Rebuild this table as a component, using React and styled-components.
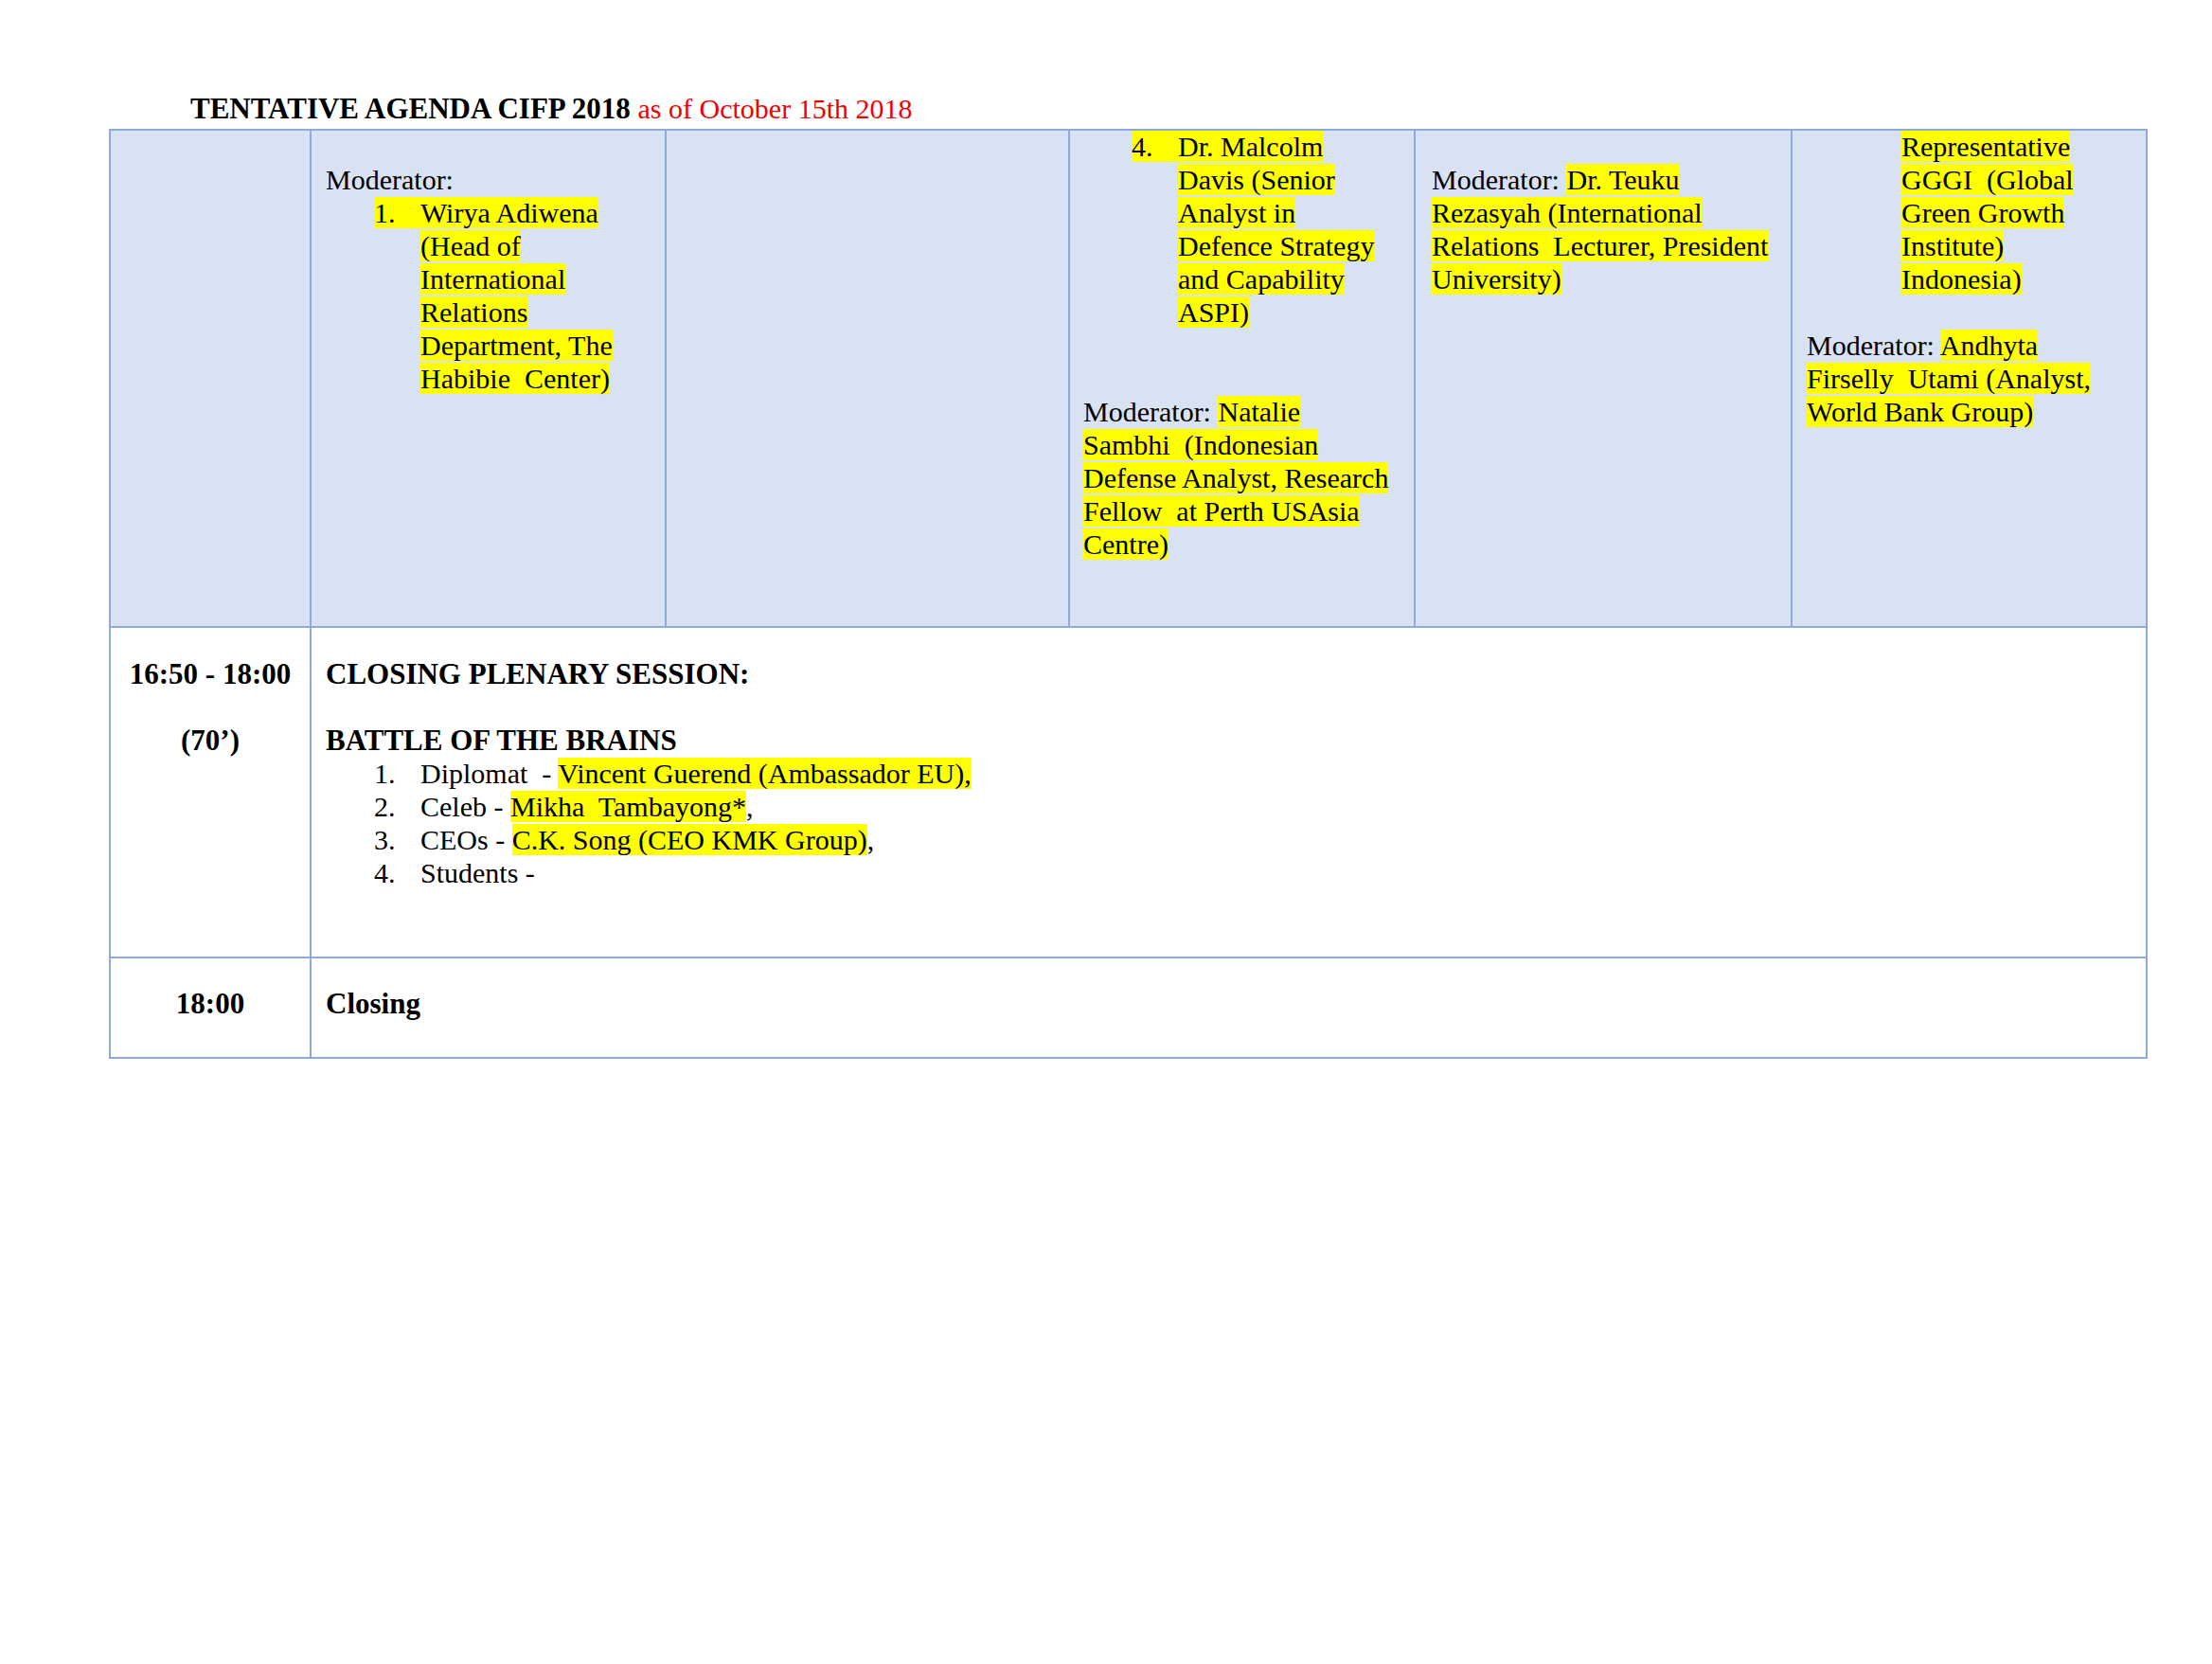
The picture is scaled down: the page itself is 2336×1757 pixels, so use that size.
import styled, { createGlobalStyle } from "styled-components"

const GlobalStyle = createGlobalStyle`
    body {
        margin: 0;
        background: #fff;
    }
`

const Page = styled.div`
    box-sizing: border-box;
    min-height: 1757px;
    padding: 97px 0 0 115px;
    font-family: "Liberation Serif", "Times New Roman", serif;
    font-size: 30px;
    line-height: 35px;
    color: #000;
`

const Title = styled.div`
    margin: 0 0 4px 86px;
    font-weight: bold;
    font-size: 31px;
    white-space: nowrap;
`
const Red = styled.span`
    color: #f20000;
    font-weight: normal;
    font-size: 30px;
`

const Table = styled.div`
    display: grid;
    grid-template-columns: 212px 375px 426px 365px 398px 375px;
    grid-template-rows: 525px 349px 106px;
    width: max-content;
    border-left: 2px solid #8eaadb;
    border-top: 2px solid #8eaadb;
`

const Cell = styled.div`
    box-sizing: border-box;
    border-right: 2px solid #8eaadb;
    border-bottom: 2px solid #8eaadb;
    background: ${props => props.$shaded ? "#d9e2f3" : "#fff"};
    padding: ${props => props.$top || 0}px 15px 0 ${props => props.$left || 15}px;
    grid-column: ${props => props.$span ? "2 / -1" : "auto"};
    text-align: ${props => props.$center ? "center" : "left"};
    font-weight: ${props => props.$bold ? "bold" : "normal"};
    font-size: ${props => props.$bold ? 31 : 30}px;
    white-space: nowrap;
`

// row one is a page continuation, the text sits right under the table top
const Body = styled.div`
    margin-top: -1px;
`

const Gap = styled.div`
    height: ${props => (props.$n || 1) * 35}px;
`

const Bold = styled.div`
    font-weight: bold;
    font-size: 31px;
`

const Hl = styled.span`
    background: #ffff00;
`

const Item = styled.div`
    display: flex;
    padding-left: 51px;
`
const Num = styled.span`
    display: block;
    flex: none;
    width: 49px;
    height: 33px;
    padding: 1px 0;
    line-height: 33px;
    background: ${props => props.$hl ? "#ffff00" : "transparent"};
    background-clip: content-box;
`

const Indent = styled.div`
    padding-left: 100px;
`

const App = () => {
    return (
        <Page>
            <GlobalStyle />
            <Title>
                TENTATIVE AGENDA CIFP 2018 <Red>as of October 15th 2018</Red>
            </Title>
            <Table>
                <Cell $shaded />
                <Cell $shaded>
                    <Body>
                        <Gap />
                        <div>Moderator:</div>
                        <Item>
                            <Num $hl>1.</Num>
                            <div>
                                <Hl>Wirya Adiwena</Hl><br />
                                <Hl>(Head of</Hl><br />
                                <Hl>International</Hl><br />
                                <Hl>Relations</Hl><br />
                                <Hl>Department, The</Hl><br />
                                <Hl>Habibie&nbsp; Center)</Hl>
                            </div>
                        </Item>
                    </Body>
                </Cell>
                <Cell $shaded />
                <Cell $shaded $left={14}>
                    <Body>
                        <Item>
                            <Num $hl>4.</Num>
                            <div>
                                <Hl>Dr. Malcolm</Hl><br />
                                <Hl>Davis (Senior</Hl><br />
                                <Hl>Analyst in</Hl><br />
                                <Hl>Defence Strategy</Hl><br />
                                <Hl>and Capability</Hl><br />
                                <Hl>ASPI)</Hl>
                            </div>
                        </Item>
                        <Gap $n={2} />
                        <div>
                            Moderator: <Hl>Natalie</Hl><br />
                            <Hl>Sambhi&nbsp; (Indonesian</Hl><br />
                            <Hl>Defense Analyst, Research</Hl><br />
                            <Hl>Fellow&nbsp; at Perth USAsia</Hl><br />
                            <Hl>Centre)</Hl>
                        </div>
                    </Body>
                </Cell>
                <Cell $shaded $left={17}>
                    <Body>
                        <Gap />
                        <div>
                            Moderator: <Hl>Dr. Teuku</Hl><br />
                            <Hl>Rezasyah (International</Hl><br />
                            <Hl>Relations&nbsp; Lecturer, President</Hl><br />
                            <Hl>University)</Hl>
                        </div>
                    </Body>
                </Cell>
                <Cell $shaded>
                    <Body>
                        <Indent>
                            <Hl>Representative</Hl><br />
                            <Hl>GGGI&nbsp; (Global</Hl><br />
                            <Hl>Green Growth</Hl><br />
                            <Hl>Institute)</Hl><br />
                            <Hl>Indonesia)</Hl>
                        </Indent>
                        <Gap />
                        <div>
                            Moderator: <Hl>Andhyta</Hl><br />
                            <Hl>Firselly&nbsp; Utami (Analyst,</Hl><br />
                            <Hl>World Bank Group)</Hl>
                        </div>
                    </Body>
                </Cell>

                <Cell $center $bold $top={31}>
                    <div>16:50 - 18:00</div>
                    <Gap />
                    <div>(70’)</div>
                </Cell>
                <Cell $span $top={31}>
                    <Bold>CLOSING PLENARY SESSION:</Bold>
                    <Gap />
                    <Bold>BATTLE OF THE BRAINS</Bold>
                    <Item>
                        <Num>1.</Num>
                        <div>Diplomat&nbsp; - <Hl>Vincent Guerend (Ambassador EU),</Hl></div>
                    </Item>
                    <Item>
                        <Num>2.</Num>
                        <div>Celeb - <Hl>Mikha&nbsp; Tambayong*</Hl>,</div>
                    </Item>
                    <Item>
                        <Num>3.</Num>
                        <div>CEOs - <Hl>C.K. Song (CEO KMK Group)</Hl>,</div>
                    </Item>
                    <Item>
                        <Num>4.</Num>
                        <div>Students -</div>
                    </Item>
                </Cell>

                <Cell $center $bold $top={30}>18:00</Cell>
                <Cell $span $bold $top={30}>Closing</Cell>
            </Table>
        </Page>
    )
}

export default App
